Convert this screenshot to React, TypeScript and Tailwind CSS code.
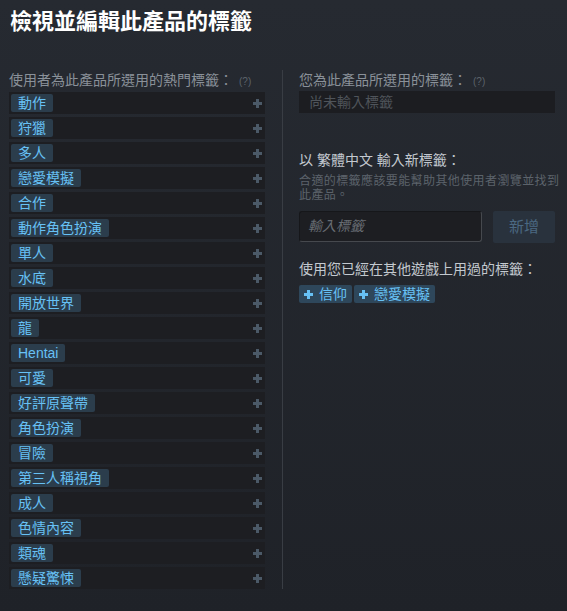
import React from "react";

const popularTags: string[] = [
	"動作",
	"狩獵",
	"多人",
	"戀愛模擬",
	"合作",
	"動作角色扮演",
	"單人",
	"水底",
	"開放世界",
	"龍",
	"Hentai",
	"可愛",
	"好評原聲帶",
	"角色扮演",
	"冒險",
	"第三人稱視角",
	"成人",
	"色情內容",
	"類魂",
	"懸疑驚悚",
];

const usedTags: string[] = ["信仰", "戀愛模擬"];

const Plus = ({ color }: { color: string }) => (
	<svg width="9" height="9" viewBox="0 0 9 9" className="shrink-0">
		<rect x="3" y="0" width="3" height="9" fill={color} />
		<rect x="0" y="3" width="9" height="3" fill={color} />
	</svg>
);

const TagRow = ({ name }: { name: string }) => {
	return (
		<div className="h-[22px] bg-[#1d1e22] flex items-center justify-between pl-[2px] pr-[3px]">
			<span className="h-[18px] px-[7px] bg-[#2b3d4c] text-[#67c1f5] text-[14px] leading-[18px] rounded-[2px] whitespace-nowrap">
				{name}
			</span>
			<Plus color="#4b5967" />
		</div>
	);
};

export default function App() {
	return (
		<div className="w-full min-h-screen bg-gradient-to-b from-[#262a31] to-[#1f2228] pl-[9px] pt-[9px] font-['Liberation_Sans','Noto_Sans_CJK_TC',sans-serif]">
			<h1 className="text-[22px] font-bold text-white leading-[26px] ml-px">檢視並編輯此產品的標籤</h1>

			<div className="flex mt-[35px]">
				{/* 熱門標籤 */}
				<div className="w-[256px] shrink-0">
					<div className="h-[20px] leading-[20px] text-[14px] text-[#8a9199] whitespace-nowrap">
						使用者為此產品所選用的熱門標籤：
						<span className="text-[10px] text-[#5c636b] ml-[6px]">(?)</span>
					</div>
					<div className="flex flex-col gap-[3px] mt-[2px]">
						{popularTags.map((tag, index) => (
							<TagRow key={index} name={tag} />
						))}
					</div>
				</div>

				<div className="ml-[17px] border-l border-[#393d44] pl-[16px]">
					<div className="w-[256px]">
						<div className="h-[20px] leading-[20px] text-[14px] text-[#8a9199] whitespace-nowrap">
							您為此產品所選用的標籤：
							<span className="text-[10px] text-[#5c636b] ml-[6px]">(?)</span>
						</div>
						<div className="mt-px h-[22px] bg-[#1c1d21] pl-[10px] text-[14px] leading-[22px] text-[#4f545a]">
							尚未輸入標籤
						</div>

						<div className="mt-[37px] h-[20px] leading-[20px] text-[14px] text-[#c3c9cf] whitespace-nowrap">
							以 繁體中文 輸入新標籤：
						</div>
						<p className="mt-[4px] text-[12px] tracking-[0.4px] leading-[14px] text-[#5c636b] whitespace-nowrap">
							合適的標籤應該要能幫助其他使用者瀏覽並找到
							<br />
							此產品。
						</p>

						<div className="flex mt-[9px]">
							<div className="w-[183px] h-[31px] bg-[#1d1e22] border border-t-[#16171a] border-l-[#16171a] border-r-[#46494e] border-b-[#46494e] rounded-[3px] pl-[8px] text-[14px] leading-[29px] italic text-[#676c72]">
								輸入標籤
							</div>
							<div className="ml-[11px] w-[62px] h-[32px] bg-[#29323d] rounded-[2px] text-[15px] leading-[32px] text-center text-[#4b6982]">
								新增
							</div>
						</div>

						<div className="mt-[16px] h-[20px] leading-[20px] text-[14px] text-[#c3c9cf] whitespace-nowrap">
							使用您已經在其他遊戲上用過的標籤：
						</div>
						<div className="flex gap-[2px] mt-[6px]">
							{usedTags.map((tag, index) => (
								<span
									key={index}
									className="h-[18px] flex items-center gap-[6px] px-[5px] bg-[#2e475b] text-[#67c1f5] text-[14px] leading-[18px] rounded-[2px] whitespace-nowrap"
								>
									<Plus color="#67c1f5" />
									{tag}
								</span>
							))}
						</div>
					</div>
				</div>
			</div>
		</div>
	);
}
